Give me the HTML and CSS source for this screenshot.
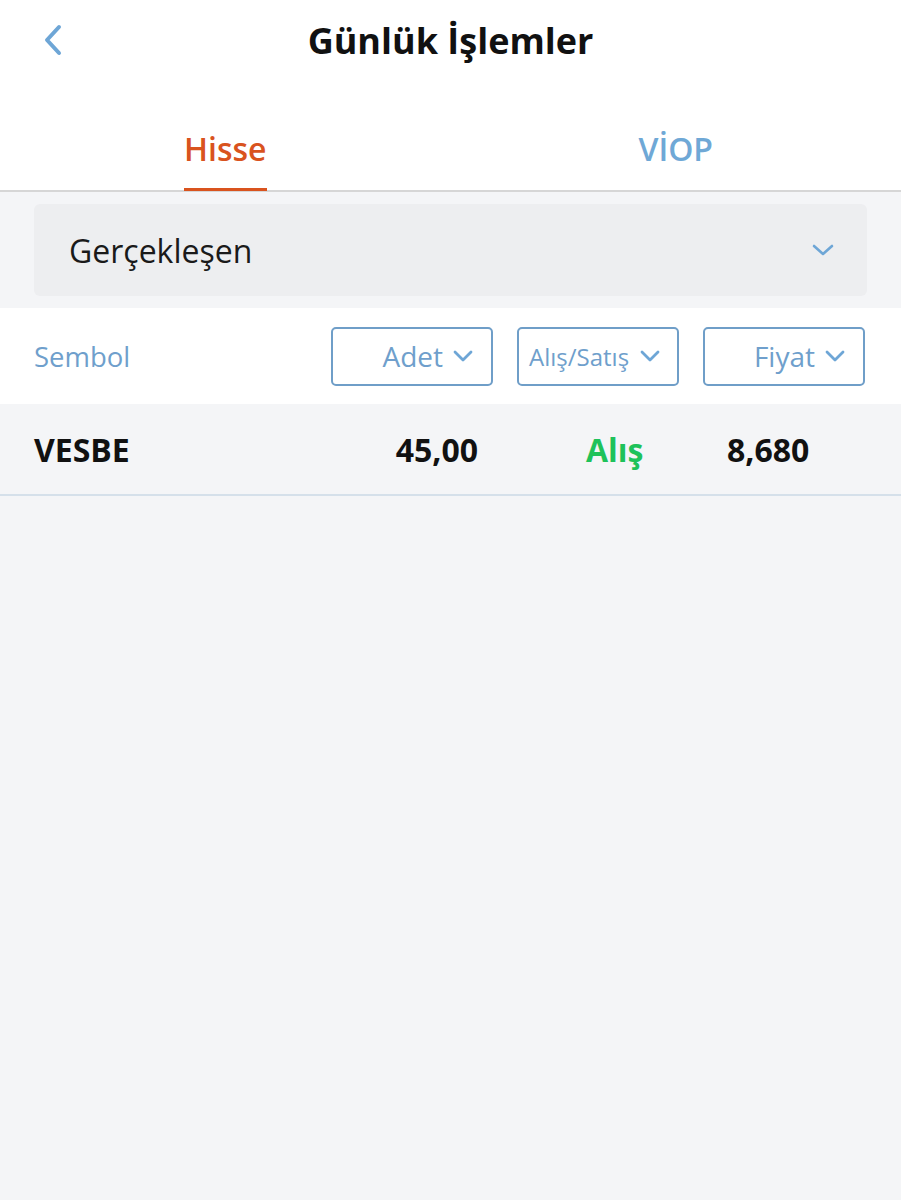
FILE: index.html
```html
<!DOCTYPE html>
<html lang="tr">
<head>
  <meta charset="UTF-8" />
  <meta name="viewport" content="width=device-width, initial-scale=1.0"/>
  <title>Günlük İşlemler</title>
  <link rel="stylesheet" href="styles.css">
</head>
<body>

<div class="header">
  <button class="back" type="button" aria-label="Geri">
    <svg width="22" height="34" viewBox="0 0 22 34">
      <path d="M17 4 L5 17 L17 30" fill="none" stroke="#6ea6d6" stroke-width="4" stroke-linecap="round" stroke-linejoin="round"/>
    </svg>
  </button>
  <h1>Günlük İşlemler</h1>
  <div></div>
</div>

<div class="tabs">
  <div class="tab active"><span>Hisse</span></div>
  <div class="tab"><span>VİOP</span></div>
</div>

<div class="select-wrap">
  <div class="select">
    <span>Gerçekleşen</span>
    <svg width="22" height="14" viewBox="0 0 22 14">
      <path d="M2 3 L11 11 L20 3" fill="none" stroke="#6ea6d6" stroke-width="2.6" stroke-linecap="round" stroke-linejoin="round"/>
    </svg>
  </div>
</div>

<div class="grid head">
  <div class="col-name">Sembol</div>
  <button class="sort" type="button">Adet <svg width="20" height="12" viewBox="0 0 20 12"><path d="M2 2 L10 10 L18 2" fill="none" stroke="#6ea6d6" stroke-width="2.8" stroke-linecap="round" stroke-linejoin="round"/></svg></button>
  <button class="sort small" type="button">Alış/Satış <svg width="20" height="12" viewBox="0 0 20 12"><path d="M2 2 L10 10 L18 2" fill="none" stroke="#6ea6d6" stroke-width="2.8" stroke-linecap="round" stroke-linejoin="round"/></svg></button>
  <button class="sort" type="button">Fiyat <svg width="20" height="12" viewBox="0 0 20 12"><path d="M2 2 L10 10 L18 2" fill="none" stroke="#6ea6d6" stroke-width="2.8" stroke-linecap="round" stroke-linejoin="round"/></svg></button>
</div>

<div class="grid row">
  <div class="col-name">VESBE</div>
  <div class="qty">45,00</div>
  <div class="side buy">Alış</div>
  <div class="price">8,680</div>
</div>

</body>
</html>
```

FILE: styles.css
```css
body {
  font-family: "Open Sans", "Noto Sans", sans-serif;
  background-color: #f4f5f7;
  color: #111;
  margin: 0;
  min-height: 100vh;
}

.header {
  background-color: #fff;
  height: 80px;
  display: grid;
  grid-template-columns: 1fr auto 1fr;
  align-items: center;
}

.header h1 {
  margin: 0;
  font-size: 36px;
  font-weight: 700;
  color: #111;
}

.back {
  background: none;
  border: none;
  padding: 0 0 0 42px;
  width: 84px;
  height: 60px;
  display: flex;
  align-items: center;
  cursor: pointer;
}

.tabs {
  background-color: #fff;
  height: 110px;
  display: flex;
  border-bottom: 2px solid #d6d6d6;
}

.tab {
  flex: 1;
  display: flex;
  justify-content: center;
  align-items: flex-end;
}

.tab span {
  font-size: 32px;
  font-weight: 600;
  color: #6fa8d6;
  padding-bottom: 18px;
  border-bottom: 3px solid transparent;
  margin-bottom: -1px;
}

.tab.active span {
  color: #d9531e;
  border-bottom-color: #d9531e;
}

.select-wrap {
  padding: 12px 34px;
}

.select {
  background-color: #edeef0;
  border-radius: 6px;
  height: 92px;
  display: flex;
  align-items: center;
  justify-content: space-between;
  padding: 0 33px 0 35px;
  font-size: 32px;
  color: #1a1a1a;
}

.grid {
  display: grid;
  grid-template-columns: 1fr 162px 162px 162px;
  column-gap: 24px;
  align-items: center;
  padding: 0 36px 0 34px;
}

.head {
  background-color: #fff;
  height: 96px;
}

.head .col-name {
  font-size: 27.5px;
  color: #6f9fcc;
}

.sort {
  height: 59px;
  border: 2px solid #6f9ec8;
  border-radius: 5px;
  background-color: #fff;
  font-family: inherit;
  font-size: 28px;
  color: #6f9fcc;
  display: flex;
  align-items: center;
  justify-content: flex-end;
  gap: 10px;
  padding: 0 18px 0 0;
}

.sort.small {
  font-size: 24px;
  justify-content: flex-start;
  gap: 11px;
  padding: 0 0 0 10px;
}

.row {
  height: 90px;
  border-bottom: 2px solid #d5e0ea;
  font-size: 32px;
  font-weight: 700;
  color: #111;
}

.qty {
  text-align: right;
  padding-right: 15px;
}

.side {
  padding-left: 69px;
}

.buy {
  color: #1ec25a;
}

.price {
  padding-left: 24px;
}
```
